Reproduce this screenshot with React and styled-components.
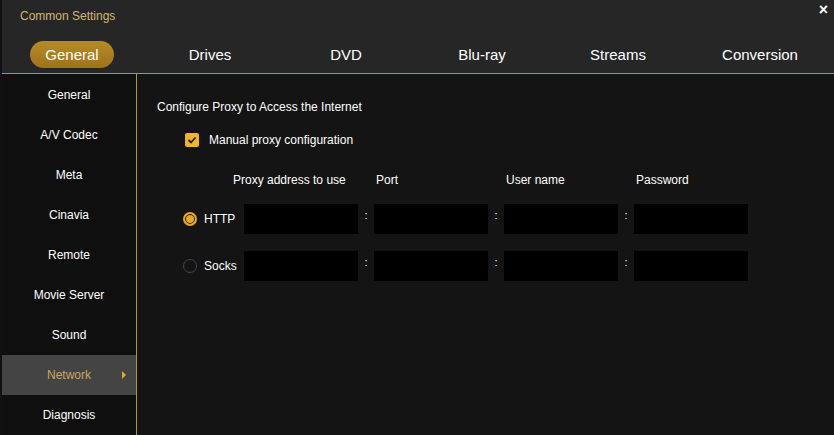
import React from "react";
import styled, { createGlobalStyle } from "styled-components";

const G = createGlobalStyle`
  body { margin:0; background:#1a1a1a; font-family: "Liberation Sans", Arial, sans-serif; }
`;
const Win = styled.div`
  width:834px; height:435px; display:flex; flex-direction:column; background:#262626;
  border-left:2px solid #111; box-sizing:border-box; overflow:hidden; position:relative;
`;
const Title = styled.div`
  height:36px; display:flex; align-items:center; padding-left:18px; color:#d4b672; font-size:12px;
`;
const Close = styled.div`
  position:absolute; right:6px; top:1px; color:#fff; font-size:16px; font-weight:bold;
`;
const Tabs = styled.div`
  height:42px; display:flex; align-items:center; border-bottom:1px solid #b8903a; padding-top:5px;
`;
const Tab = styled.div`
  width:${p => p.w}px; display:flex; justify-content:center; color:#fff; font-size:15px;
  span { padding:5px 0; width:84px; text-align:center; border-radius:14px;
    background:${p => p.active ? "linear-gradient(#b48a2a,#9f7418)" : "transparent"}; }
`;
const Body = styled.div` flex:1; display:flex; background:#141414; `;
const Side = styled.div`
  width:134px; border-right:1px solid #b8903a; padding-top:1px; background:#0f0f0f;
`;
const Item = styled.div`
  height:40px; display:flex; align-items:center; justify-content:center; font-size:12px; position:relative;
  color:${p => p.active ? "#c9a85c" : "#fff"}; background:${p => p.active ? "#444" : "transparent"};
  ${p => p.active && `&:after{content:"";position:absolute;right:10px;top:16px;border-left:4px solid #e6a81c;border-top:4px solid transparent;border-bottom:4px solid transparent;}`}
`;
const Main = styled.div` flex:1; padding:26px 0 0 20px; color:#fff; font-size:12px; `;
const Check = styled.div`
  display:flex; align-items:center; gap:10px; margin:19px 0 0 28px;
`;
const Box = styled.div`
  width:14px; height:14px; background:#f0b429; border-radius:2px; display:flex; align-items:center; justify-content:center;
`;
const Grid = styled.div`
  display:grid; grid-template-columns:61px 114px 16px 114px 16px 114px 16px 114px;
  row-gap:17px; margin:26px 0 0 26px; align-items:center;
`;
const H = styled.div` padding-left:${p => p.pl||0}px; margin-left:${p => p.ml||0}px; white-space:nowrap; `;
const Radio = styled.div`
  display:flex; align-items:center; gap:7px; font-size:12px;
  i { border-radius:50%; box-sizing:border-box; width:14px; height:14px;
    border:${p => p.on ? "2px solid #e6a81c" : "1px solid #444"};
    ${p => p.on && "background:#e6a81c; box-shadow: inset 0 0 0 1px #141414;"} }
`;
const Inp = styled.div` height:30px; background:#000; `;
const Col = styled.div` text-align:center; font-size:11px; padding-bottom:8px; `;

const tabs = [["General",140],["Drives",136],["DVD",136],["Blu-ray",136],["Streams",136],["Conversion",148]];
const items = ["General","A/V Codec","Meta","Cinavia","Remote","Movie Server","Sound","Network","Diagnosis"];

const Row = ({ label, on }) => (<>
  <Radio on={on}><i />{label}</Radio>
  <Inp /><Col>:</Col><Inp /><Col>:</Col><Inp /><Col>:</Col><Inp />
</>);

export default function App() {
  return (<Win><G />
    <Title>Common Settings</Title><Close>×</Close>
    <Tabs>{tabs.map(([t,w],i) => <Tab key={t} w={w} active={i===0}><span>{t}</span></Tab>)}</Tabs>
    <Body>
      <Side>{items.map(t => <Item key={t} active={t==="Network"}>{t}</Item>)}</Side>
      <Main>
        <div>Configure Proxy to Access the Internet</div>
        <Check><Box><svg width="10" height="10" viewBox="0 0 10 10"><path d="M1.5 5 L4 7.5 L8.5 2.5" stroke="#222" strokeWidth="1.8" fill="none"/></svg></Box>Manual proxy configuration</Check>
        <Grid>
          <div/><H ml={-11}>Proxy address to use</H><div/><H pl={2}>Port</H><div/><H pl={2}>User name</H><div/><H pl={2}>Password</H>
          <Row label="HTTP" on />
          <Row label="Socks" />
        </Grid>
      </Main>
    </Body>
  </Win>);
}
